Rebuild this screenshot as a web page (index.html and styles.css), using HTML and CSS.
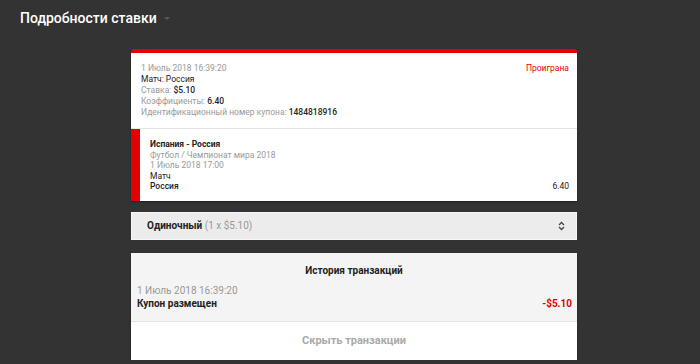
FILE: index.html
```html
<!DOCTYPE html>
<html lang="ru">
<head>
  <meta charset="UTF-8" />
  <title>Подробности ставки</title>
  <link rel="stylesheet" href="styles.css">
</head>
<body>
  <header class="page-header">
    <h1>Подробности ставки</h1>
    <span class="caret"></span>
  </header>

  <main class="content">
    <!-- Bet summary card -->
    <section class="bet-card">
      <div class="bet-info">
        <div class="bet-info-top">
          <div class="muted">1 Июль 2018 16:39:20</div>
          <div class="status-lost">Проиграна</div>
        </div>
        <div>Матч: Россия</div>
        <div><span class="muted">Ставка:</span> <b>$5.10</b></div>
        <div><span class="muted">Коэффициенты:</span> <b>6.40</b></div>
        <div><span class="muted">Идентификационный номер купона:</span> <b>1484818916</b></div>
      </div>

      <div class="selection">
        <div class="selection-event">Испания - Россия</div>
        <div class="muted">Футбол / Чемпионат мира 2018</div>
        <div class="muted">1 Июль 2018 17:00</div>
        <div>Матч</div>
        <div class="selection-row">
          <span class="pick">Россия</span>
          <span>6.40</span>
        </div>
      </div>
    </section>

    <!-- Bet type selector -->
    <div class="bet-type">
      <span><b>Одиночный</b> <span class="muted">(1 x $5.10)</span></span>
      <svg class="updown" width="7" height="10" viewBox="0 0 7 10">
        <path d="M1 4 L3.5 1.5 L6 4" fill="none" stroke="#444" stroke-width="1.3"/>
        <path d="M1 6 L3.5 8.5 L6 6" fill="none" stroke="#444" stroke-width="1.3"/>
      </svg>
    </div>

    <!-- Transactions -->
    <section class="transactions">
      <div class="tx-body">
        <h2>История транзакций</h2>
        <div class="tx-date">1 Июль 2018 16:39:20</div>
        <div class="tx-row">
          <span class="tx-name">Купон размещен</span>
          <span class="tx-amount">-$5.10</span>
        </div>
      </div>
      <div class="tx-toggle">Скрыть транзакции</div>
    </section>
  </main>
</body>
</html>
```

FILE: styles.css
```css
/* GLOBAL */
body {
  margin: 0;
  background-color: #333;
  font-family: Roboto, 'Liberation Sans', Arial, sans-serif;
  color: #222;
}

/* HEADER */
.page-header {
  height: 35px;
  display: flex;
  align-items: center;
  padding-left: 20px;
}
.page-header h1 {
  margin: 0;
  font-size: 14px;
  font-weight: 500;
  color: #fff;
}
.caret {
  margin-left: 7px;
  margin-top: 1px;
  border-left: 3px solid transparent;
  border-right: 3px solid transparent;
  border-top: 3px solid #5a5a5a;
}

/* MAIN COLUMN */
.content {
  width: 446px;
  margin-left: 131px;
  padding-top: 14px;
}

.muted {
  color: #999;
}

/* BET CARD */
.bet-card {
  background-color: #fff;
  border-top: 4px solid #e40000;
  border-radius: 3px 3px 0 0;
  box-shadow: 0 1px 2px rgba(0, 0, 0, 0.4);
  font-size: 8.5px;
  line-height: 11px;
}
.bet-info {
  padding: 10px 8px 10px 10px;
  border-bottom: 1px solid #e6e6e6;
}
.bet-info b {
  font-weight: 500;
  color: #222;
}
.bet-info-top {
  display: flex;
  justify-content: space-between;
}
.status-lost {
  color: #e40000;
}

.selection {
  border-left: 9px solid #e40000;
  padding: 10px 8px 9px 10px;
  line-height: 10.5px;
}
.selection-event {
  font-weight: 700;
}
.selection-row {
  display: flex;
  justify-content: space-between;
}
.pick {
  font-weight: 500;
}

/* BET TYPE SELECT */
.bet-type {
  margin-top: 11px;
  height: 26px;
  background-color: #ececec;
  border: 1px solid #f7f7f7;
  display: flex;
  align-items: center;
  justify-content: space-between;
  padding: 0 11px 0 15px;
  font-size: 10px;
}
.bet-type b {
  font-weight: 700;
  color: #222;
}

/* TRANSACTIONS */
.transactions {
  margin-top: 13px;
  background-color: #fff;
  box-shadow: 0 1px 2px rgba(0, 0, 0, 0.4);
}
.tx-body {
  background-color: #f4f4f4;
  padding: 11px 6px 11px 6px;
  border-bottom: 1px solid #e4e4e4;
  font-size: 10px;
}
.tx-body h2 {
  margin: 0 0 8px;
  text-align: center;
  font-size: 10px;
  font-weight: 700;
  line-height: 13px;
}
.tx-date {
  color: #999;
  font-size: 10px;
  line-height: 12px;
}
.tx-row {
  display: flex;
  justify-content: space-between;
  line-height: 13px;
}
.tx-name {
  font-weight: 700;
}
.tx-amount {
  color: #e40000;
  font-weight: 700;
  margin-right: -1px;
}
.tx-toggle {
  height: 38px;
  display: flex;
  align-items: center;
  justify-content: center;
  color: #aaa;
  font-size: 11px;
  font-weight: 700;
}
```
